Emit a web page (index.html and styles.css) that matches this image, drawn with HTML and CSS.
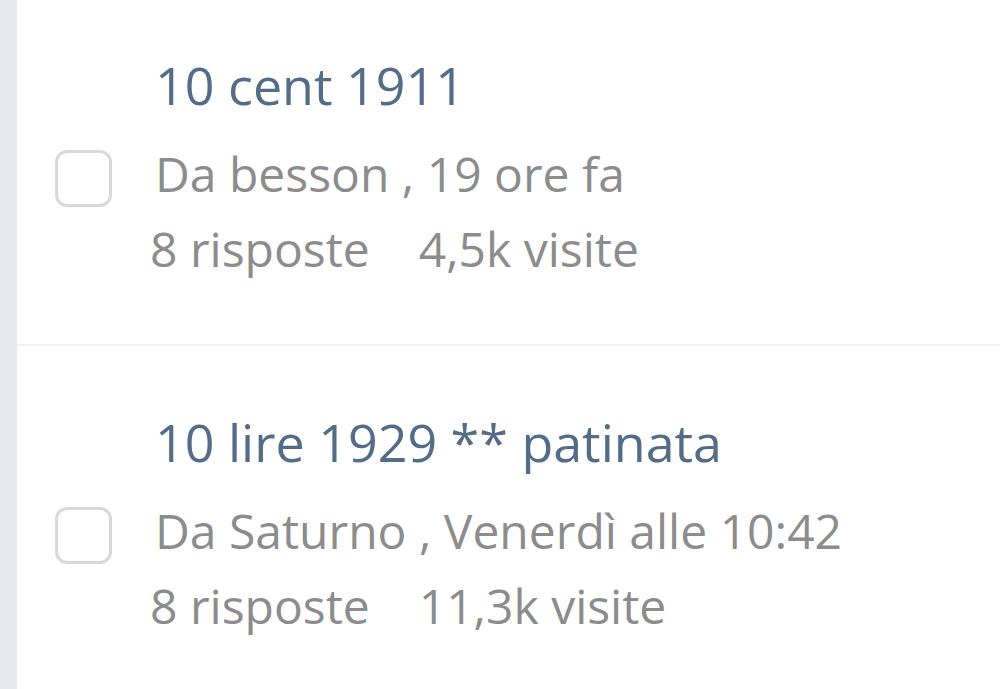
FILE: index.html
```html
<!DOCTYPE html>
<html lang="it">
<head>
<meta charset="utf-8">
<link rel="stylesheet" href="styles.css">
</head>
<body>
<div class="page">
  <div class="rail"></div>
  <ul class="topics">
    <li class="topic">
      <a class="title">10 cent 1911</a>
      <span class="check"></span>
      <div class="meta">Da besson , 19 ore fa</div>
      <div class="stats"><span>8 risposte</span><span>4,5k visite</span></div>
    </li>
    <li class="topic">
      <a class="title">10 lire 1929 ** patinata</a>
      <span class="check"></span>
      <div class="meta">Da Saturno , Venerdì alle 10:42</div>
      <div class="stats"><span>8 risposte</span><span>11,3k visite</span></div>
    </li>
  </ul>
</div>
</body>
</html>
```
FILE: styles.css
```css
html, body {
  margin: 0;
  padding: 0;
  background: #ffffff;
  overflow: hidden;
}
body {
  font-family: "Open Sans", "Noto Sans", sans-serif;
}
.page {
  display: flex;
  min-height: 689px;
}
.rail {
  width: 17px;
  flex: none;
  background: #e6e9ed;
}
.topics {
  list-style: none;
  margin: -11px 0 0 0;
  padding: 0;
  flex: 1;
}
.topic {
  display: grid;
  grid-template-columns: 57px 1fr;
  column-gap: 43px;
  padding: 66px 0 58px 38px;
  border-bottom: 2px solid #eef0f2;
}
.title {
  grid-column: 2;
  grid-row: 1;
  font-size: 52px;
  line-height: 60px;
  font-weight: 500;
  color: #536d88;
  margin-bottom: 21px;
}
.check {
  grid-column: 1;
  grid-row: 2;
  align-self: center;
  width: 51px;
  height: 51px;
  margin-top: 10px;
  border: 3px solid #d9d9d9;
  border-radius: 12px;
}
.meta {
  grid-column: 2;
  grid-row: 2;
  font-size: 48px;
  line-height: 75px;
  color: #8c8c8c;
}
.stats {
  grid-column: 2;
  grid-row: 3;
  display: flex;
  gap: 49px;
  margin-left: -5px;
  font-size: 48px;
  line-height: 75px;
  color: #8c8c8c;
}
```
